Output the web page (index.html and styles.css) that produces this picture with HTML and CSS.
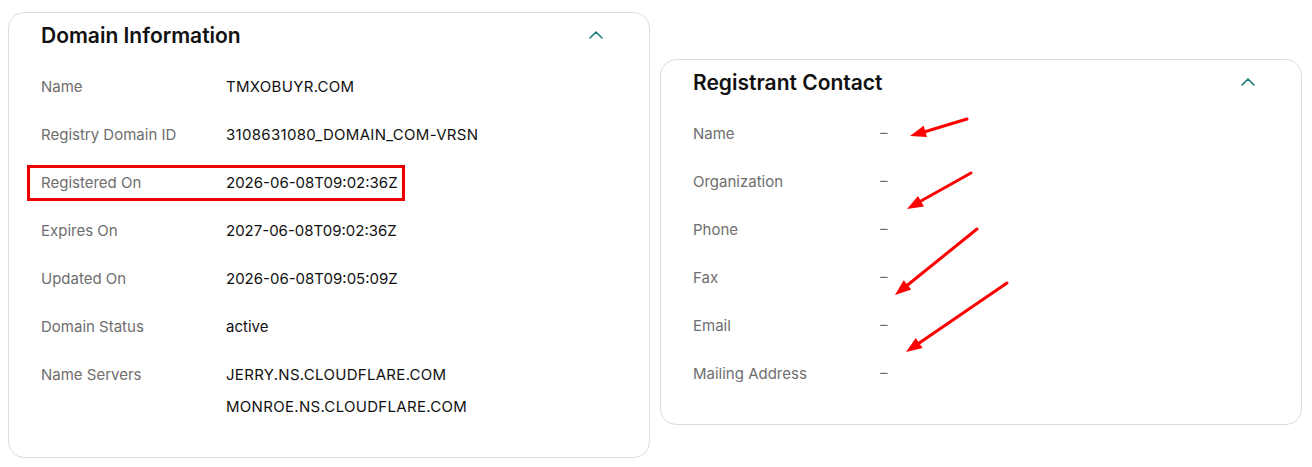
FILE: index.html
```html
<!DOCTYPE html>
<html lang="en">
<head>
<meta charset="utf-8">
<title>Domain Information</title>
<link rel="stylesheet" href="styles.css">
</head>
<body>
<div class="page">
  <section class="card">
    <header class="card-head">
      <h2 class="card-title">Domain Information</h2>
      <svg class="chev" width="14" height="8" viewBox="0 0 14 8"><path d="M1 7 L7 1 L13 7" fill="none" stroke="#1c7c7d" stroke-width="1.6" stroke-linecap="round" stroke-linejoin="round"/></svg>
    </header>
    <dl class="rows">
      <div class="row"><dt>Name</dt><dd class="caps">TMXOBUYR.COM</dd></div>
      <div class="row"><dt>Registry Domain ID</dt><dd class="caps">3108631080_DOMAIN_COM-VRSN</dd></div>
      <div class="row highlighted"><dt>Registered On</dt><dd>2026-06-08T09:02:36Z</dd><span class="mark-box"></span></div>
      <div class="row"><dt>Expires On</dt><dd>2027-06-08T09:02:36Z</dd></div>
      <div class="row"><dt>Updated On</dt><dd>2026-06-08T09:05:09Z</dd></div>
      <div class="row"><dt>Domain Status</dt><dd>active</dd></div>
      <div class="row"><dt>Name Servers</dt><dd class="multi caps"><span>JERRY.NS.CLOUDFLARE.COM</span><span>MONROE.NS.CLOUDFLARE.COM</span></dd></div>
    </dl>
  </section>
  <section class="card card-offset">
    <header class="card-head">
      <h2 class="card-title">Registrant Contact</h2>
      <svg class="chev" width="14" height="8" viewBox="0 0 14 8"><path d="M1 7 L7 1 L13 7" fill="none" stroke="#1c7c7d" stroke-width="1.6" stroke-linecap="round" stroke-linejoin="round"/></svg>
    </header>
    <dl class="rows">
      <div class="row"><dt>Name</dt><dd class="empty">–</dd></div>
      <div class="row"><dt>Organization</dt><dd class="empty">–</dd></div>
      <div class="row"><dt>Phone</dt><dd class="empty">–</dd></div>
      <div class="row"><dt>Fax</dt><dd class="empty">–</dd></div>
      <div class="row"><dt>Email</dt><dd class="empty">–</dd></div>
      <div class="row"><dt>Mailing Address</dt><dd class="empty">–</dd></div>
    </dl>
  </section>
  <svg class="arrows" width="1312" height="467" viewBox="0 0 1312 467">
    <g stroke="#ff0000" stroke-width="3" stroke-linecap="round" fill="#ff0000">
      <line x1="967" y1="119" x2="924" y2="132"/>
      <polygon stroke="none" points="910,136 923.6,125.7 927,137.1"/>
      <line x1="971" y1="173" x2="920" y2="201.5"/>
      <polygon stroke="none" points="907,209 918,195.9 923.9,206.4"/>
      <line x1="977" y1="229" x2="907" y2="285.5"/>
      <polygon stroke="none" points="895,295 903.7,280.3 911.2,289.6"/>
      <line x1="1007" y1="283" x2="918.5" y2="343.5"/>
      <polygon stroke="none" points="906,352 915.8,338 922.6,347.9"/>
    </g>
  </svg>
</div>
</body>
</html>
```

FILE: styles.css
```css
* { box-sizing: border-box; }

html, body {
  margin: 0;
  padding: 0;
  background: #ffffff;
}

body {
  font-family: Inter, "Noto Sans", "Liberation Sans", sans-serif;
  color: #111111;
}

.page {
  position: relative;
  display: grid;
  grid-template-columns: 642px 642px;
  column-gap: 10px;
  align-items: start;
  padding: 12px 0 0 8px;
  width: 1312px;
  height: 467px;
}

.card {
  border: 1px solid #d9dde1;
  border-radius: 16px;
  background: #ffffff;
  padding: 9px 46px 26px 32px;
}

.card-offset {
  margin-top: 47px;
}

.card-head {
  display: flex;
  align-items: center;
  justify-content: space-between;
  height: 28px;
  margin-bottom: 13px;
}

.card-title {
  margin: 0;
  font-size: 21px;
  line-height: 28px;
  font-weight: 600;
  color: #111111;
}

.chev {
  display: block;
  margin-top: -3px;
}

.rows {
  margin: 0;
}

.row {
  position: relative;
  display: grid;
  grid-template-columns: 185px 1fr;
  padding: 12px 0;
  font-size: 15px;
  line-height: 24px;
}

.row dt {
  color: #6e6e6e;
}

.row dd {
  margin: 0;
  color: #111111;
}

.row dd.caps {
  letter-spacing: 0.3px;
}

.row dd.multi {
  display: flex;
  flex-direction: column;
  gap: 8px;
}

.row dd.empty {
  color: #6e6e6e;
  padding-left: 2px;
  margin-top: -1px;
}

.mark-box {
  position: absolute;
  left: -14px;
  top: 6px;
  width: 378px;
  height: 36px;
  border: 3px solid #ee0000;
}

.arrows {
  position: absolute;
  left: 0;
  top: 0;
  pointer-events: none;
}
```
